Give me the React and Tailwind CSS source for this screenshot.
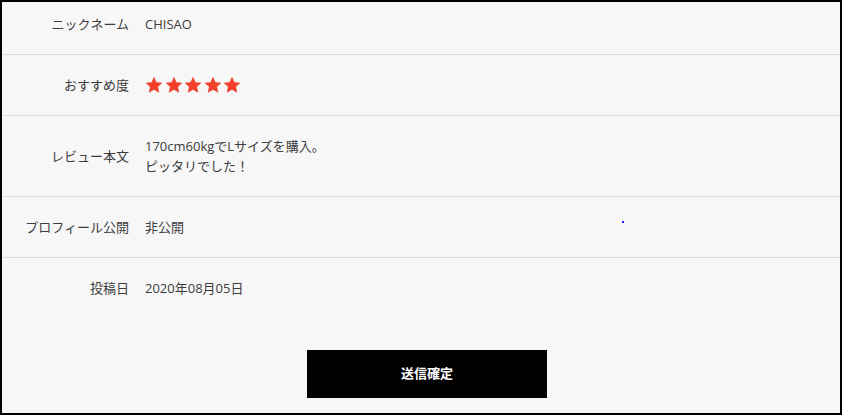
import React from "react";

const Star = () => (
  <svg width="18" height="18" viewBox="0 0 24 24" className="shrink-0">
    <path
      d="M12 1.8l3.05 6.9 7.5.7-5.67 5 1.68 7.35L12 17.9l-6.56 3.85 1.68-7.35-5.67-5 7.5-.7z"
      fill="#f2402a"
      stroke="#e0301c"
      strokeWidth="0.6"
      strokeLinejoin="round"
    />
  </svg>
);

const Row = ({ label, children, className = "" }) => (
  <div className={`flex border-b border-[#dcdcdc] ${className}`}>
    <div className="w-[143px] shrink-0 pr-4 text-right leading-5 text-[#3c3c3c]">{label}</div>
    <div className="flex-1 leading-5 text-[#3c3c3c]">{children}</div>
  </div>
);

export default function App() {
  return (
    <div
      className="relative h-[415px] w-[842px] overflow-hidden border-2 border-black bg-[#f7f7f7] text-[13px]"
      style={{ fontFamily: '"Open Sans", "Noto Sans CJK JP", sans-serif' }}
    >
      <Row label="ニックネーム" className="pt-3 pb-5">CHISAO</Row>
      <Row label="おすすめ度" className="py-5">
        <div className="flex h-5 items-center gap-[1.5px]">
          <Star />
          <Star />
          <Star />
          <Star />
          <Star />
        </div>
      </Row>
      <Row label="レビュー本文" className="py-5 items-center">
        <div>170cm60kgでLサイズを購入。</div>
        <div>ピッタリでした！</div>
      </Row>
      <Row label="プロフィール公開" className="py-5">非公開</Row>
      <div className="flex py-5">
        <div className="w-[143px] shrink-0 pr-4 text-right leading-5 text-[#3c3c3c]">投稿日</div>
        <div className="flex-1 leading-5 text-[#3c3c3c]">2020年08月05日</div>
      </div>
      <div className="mt-8 flex justify-center pl-3">
        <button className="h-12 w-60 bg-black text-[13px] font-bold text-white">送信確定</button>
      </div>
      <div className="absolute left-[620px] top-[219px] h-[2px] w-[2px] bg-[#2020ff]" />
    </div>
  );
}
